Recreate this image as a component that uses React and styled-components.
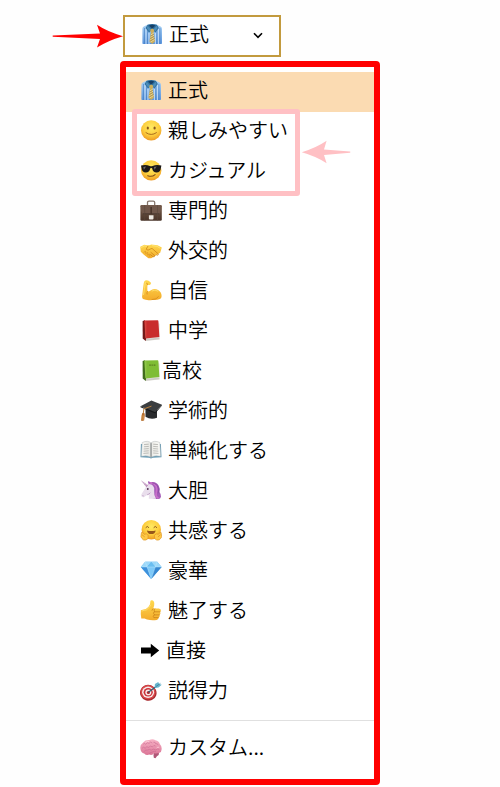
import { useState } from "react";
import styled, { createGlobalStyle } from "styled-components";

const GlobalStyle = createGlobalStyle`
  * {
    box-sizing: border-box;
  }

  body {
    margin: 0;
    background: #fefefe;
    color: #000000;
    font-family: "Noto Sans CJK JP", "Noto Sans", sans-serif;
  }
`;

const Page = styled.main`
  padding: 15px 24% 3px;
`;

const TriggerRow = styled.div`
  display: flex;
  position: relative;
  width: fit-content;
  margin: 0 0 4px 3px;
`;

const Trigger = styled.button`
  display: flex;
  align-items: center;
  min-width: 158px;
  height: 42px;
  padding: 0 16px 2px;
  border: 2px solid #c29a3e;
  background: #ffffff;
  color: inherit;
  font-family: inherit;
  font-size: 20px;
  font-weight: 350;
  line-height: 24px;
  cursor: pointer;
`;

const Menu = styled.div`
  padding: 5px 0 10px;
  border: 6px solid #ff0000;
  border-radius: 4px;
  background: #ffffff;
`;

const Group = styled.ul`
  position: relative;
  margin: 0;
  padding: 0;
  list-style: none;
`;

const Option = styled.button`
  display: flex;
  align-items: center;
  width: 100%;
  height: 40px;
  padding: 0 14px 2px;
  border: 0;
  background: ${({ $selected }) => ($selected ? "#fbdbb2" : "transparent")};
  color: inherit;
  font-family: inherit;
  font-size: 20px;
  font-weight: 350;
  line-height: 24px;
  text-align: left;
  white-space: nowrap;
  cursor: pointer;
`;

const Label = styled.span`
  margin-left: ${({ $gap = 6 }) => $gap}px;
  padding-bottom: 2px;
`;

const Icon = styled.svg`
  flex: none;
  width: 22px;
  height: 22px;
`;

const Chevron = styled.svg`
  width: 10px;
  height: 7px;
  margin-left: auto;
`;

const Divider = styled.hr`
  height: 1px;
  margin: 8px 0;
  border: 0;
  background: #e0e0e0;
`;

const Outline = styled.div`
  position: absolute;
  top: -3px;
  bottom: -4px;
  left: 6px;
  width: 168px;
  border: 5px solid #ffc0c4;
  border-radius: 3px;
  pointer-events: none;
`;

const RedArrow = styled.svg`
  position: absolute;
  top: 9px;
  right: 100%;
  width: 72px;
  height: 24px;
`;

const PinkArrow = styled.svg`
  position: absolute;
  top: 28px;
  left: 175px;
  width: 50px;
  height: 24px;
`;

const Defs = styled.svg`
  position: absolute;
  width: 0;
  height: 0;
`;

function Gradients() {
  return (
    <Defs aria-hidden="true">
      <defs>
        <radialGradient id="face" cx="0.5" cy="0.35" r="0.65">
          <stop offset="0" stopColor="#ffea62" />
          <stop offset="0.6" stopColor="#fdce3e" />
          <stop offset="1" stopColor="#ee9a22" />
        </radialGradient>
        <linearGradient id="skin" x1="0" y1="0" x2="0" y2="1">
          <stop offset="0" stopColor="#ffd94e" />
          <stop offset="1" stopColor="#f3ab2b" />
        </linearGradient>
        <linearGradient id="shirt" x1="0" y1="0" x2="0" y2="1">
          <stop offset="0" stopColor="#a9d2f5" />
          <stop offset="1" stopColor="#5a94dc" />
        </linearGradient>
        <linearGradient id="leather" x1="0" y1="0" x2="0" y2="1">
          <stop offset="0" stopColor="#7b604d" />
          <stop offset="1" stopColor="#493429" />
        </linearGradient>
        <linearGradient id="page" x1="0" y1="0" x2="1" y2="0">
          <stop offset="0" stopColor="#f7f7f4" />
          <stop offset="0.45" stopColor="#e9e9e5" />
          <stop offset="0.5" stopColor="#a9a9a7" />
          <stop offset="0.58" stopColor="#eeeeea" />
          <stop offset="1" stopColor="#fbfbf8" />
        </linearGradient>
        <linearGradient id="brain" x1="0" y1="0" x2="0" y2="1">
          <stop offset="0" stopColor="#f7b3c6" />
          <stop offset="1" stopColor="#db7596" />
        </linearGradient>
      </defs>
    </Defs>
  );
}

const Shirt = () => (
  <>
    <path d="M7 .6 2.8 2.6Q1.4 3.4 1.4 5V19.2Q1.4 20 2.2 20H20.2Q21 20 21 19.2V5Q21 3.4 19.6 2.6L15.4.6Z" fill="url(#shirt)" />
    <path d="M3.5 4V20M6.5 5V20M15.9 5V20M18.9 4V20" stroke="#3f78be" strokeWidth="0.8" opacity="0.7" />
    <path d="M5 5V20M8 9V20M14.4 9V20M17.4 5V20" stroke="#d5eafc" strokeWidth="0.8" />
    <path d="M6.6.8Q11.2-.8 15.8.8L17.8 4 14.4 8.4 11.2 5.4 8 8.4 4.6 4Z" fill="#2f6f9f" />
    <path d="M8 1.4Q11.2.2 14.4 1.4L11.2 4.8Z" fill="#153f65" />
    <path d="m6.6 1.8 3.6 3.6-2.1 1.9L5.8 4ZM15.8 1.8l-3.6 3.6 2.1 1.9L16.6 4Z" fill="#4c8db8" />
    <path d="m9.5 5.5 1.7-.9 1.7.9.3 1.8-.8 1.3 1.6 9-2.8 2.4-2.8-2.4 1.6-9-.8-1.3Z" fill="#ccae5c" />
    <path d="m10 10.8 2.6-1.5M9.6 13.2l3.4-2M9.2 15.8l4.1-2.4M9.3 18.1l4.3-2.6" stroke="#f2dfa0" strokeWidth="0.8" />
    <path d="m9.8 12 3-1.7M9.4 14.5l3.7-2.1M9.2 17l4.3-2.5" stroke="#8e7a43" strokeWidth="0.5" />
  </>
);

const Smile = () => (
  <>
    <circle cx="11.2" cy="10.4" r="10.2" fill="url(#face)" />
    <ellipse cx="7.8" cy="8" rx="1.1" ry="1.6" fill="#87571d" />
    <ellipse cx="14.6" cy="8" rx="1.1" ry="1.6" fill="#87571d" />
    <path d="M6 12.7Q11.2 16.4 16.4 12.7" fill="none" stroke="#a86c1d" strokeWidth="1" strokeLinecap="round" />
  </>
);

const Cool = () => (
  <>
    <circle cx="11.2" cy="10.4" r="10.2" fill="url(#face)" />
    <path d="M1 5.6Q6 4.4 9.8 6q1.4.5 2.8 0Q16.4 4.4 21.4 5.6l-.4 1.8q-.5 5-4.5 5.1-3.5 0-4.4-4.3-.9-.6-1.8 0-.9 4.3-4.4 4.3-4-.1-4.5-5.1Z" fill="#1d1a19" />
    <path d="m3.3 7 2.8-.4-2.2 3.2ZM13.9 7l2.8-.4-2.2 3.2Z" fill="#6c6a68" />
    <path d="M7.7 15.7Q12 17.3 15.1 14.6" fill="none" stroke="#7a4819" strokeWidth="1.1" strokeLinecap="round" />
  </>
);

const Briefcase = () => (
  <>
    <path d="M7.5 5V2.5Q7.5 1.2 9 1.2h4.2q1.5 0 1.5 1.3V5" fill="none" stroke="#87776d" strokeWidth="1.3" />
    <rect x="0.4" y="5" width="21.4" height="15.7" rx="1.2" fill="url(#leather)" />
    <path d="M.8 5.6Q.8 13.4 3.2 13.7H19q2.4-.3 2.4-8.1Z" fill="#70574a" />
    <path d="M3 13.8H19.2" stroke="#3f3029" strokeWidth="0.7" />
    <path d="M4.7 5V20.5M17.5 5V20.5" stroke="#5b483d" strokeWidth="0.6" />
    <path d="M8.9 15.2h4.6v3.2q0 1-1 1H9.9q-1 0-1-1Z" fill="#eeeae3" />
    <path d="M10.4 7h1.5v7h-1.5Z" fill="#473329" />
  </>
);

const Handshake = () => (
  <>
    <path d="M.2 6.7 4.2 4.8 8.6 5.6 11.4 4.4 17.6 5.2 21.8 7.6 20.2 12.7 16.6 15 11.2 18.3 8.4 18.2 3.9 14.7.8 11.7Z" fill="url(#skin)" />
    <path d="m8.2 5.7-2 3.5q1.6 2 4-.1l1.8-.7 6.4 5.6q-.3 2.1-2 .9M10.7 12.2l4.2 3.6q-.5 1.7-2 .8l-2.7-2.2" fill="none" stroke="#c57b14" strokeWidth="0.7" />
    <path d="m3.5 12.5 2-1.4.2 2.5 2-1.2v2.7l2-1v2.7" fill="none" stroke="#d7911e" strokeWidth="0.6" />
    <path d="m1.2 7.5 3.3-1.6 2.3.4M12 5.6l5.2.8 3.2 1.9" fill="none" stroke="#ffe680" strokeWidth="0.8" />
  </>
);

const Biceps = () => (
  <>
    <path d="M5.2.5Q7.8-.7 10.5 2.2q1.1 1.4-.4 2.5-1.1.7-2.4-.1-.6 2.5-.2 6.7 1.3.6 2.6-.6 4-3.2 8-.6 3.6 2.3 3.5 6.1-.1 2.2-1.6 2.8-3.3 1.3-7.9.9-5.3.9-9.1-.8Q1.8 18.2 2.2 15.7 3.1 7.8 3.7 3.3 4 1.2 5.2.5Z" fill="url(#skin)" />
    <path d="M7.8 4.7 6.8 3.2M7.5 11.4Q6.4 12.8 7 14.1M12 19.6Q17 19.8 18.4 16.7" fill="none" stroke="#d98f1c" strokeWidth="0.9" strokeLinecap="round" />
    <path d="M5.4 2Q4.5 8 3.5 15M11.7 11.1Q15 8.9 18.2 11.3" fill="none" stroke="#ffe376" strokeWidth="0.8" />
  </>
);

const Book = ({ cover, spine, edge, text }) => (
  <>
    <path d="m4.1 17.8 1.7 3.1 13.8-1.4V4L18 2Z" fill="#e7e5df" />
    <path d="m5 19.5 14.2-1.4M5.5 20.3l14-1.4" stroke="#a8a69f" strokeWidth="0.4" />
    <path d="m2.6 1.1 2.4-.8 1.1 18.1-.4 2.6-3-2.6Z" fill={spine} />
    <path d="M4.1.5 17.6.2q.7 0 .8.7l1 16.2-13.8 1.4Z" fill={cover} />
    <path d="M5.8 1.2v16.7" stroke={edge} strokeWidth="0.5" />
    {text && <path d="M9.2 5.2h1.6M11.5 5.2h1.3M13.6 5.2h1.8" stroke="#587c21" strokeWidth="1.3" />}
  </>
);

const Cap = () => (
  <>
    <path d="M5.5 8.5v8.2q5.3 3.3 11.5 1V9Z" fill="#292b2d" />
    <path d="M.5 6.3 11.4.6 22 4.7 15.2 12.2Z" fill="#3b3e40" />
    <path d="M.5 6.3 15.2 12.2 22 4.7v.9l-6.8 7.8L.5 7.3Z" fill="#17191b" />
    <path d="m11.5 6.1-7.6 2.8-.7 5" fill="none" stroke="#b87e3b" strokeWidth="1" />
    <path d="M2.4 12.9h2l.4 2-.7 5.6-2.3.4-.8-.7.7-5.3Z" fill="#b66f2e" />
    <path d="M2.1 15.4 1.9 20M3.5 15.4 3.3 20" stroke="#e9ad64" strokeWidth="0.5" />
  </>
);

const OpenBook = () => (
  <>
    <path d="M.9 4.1H20.9l.6 13.1-8.7.5-1.8.8-1.8-.8-8.7-.5Z" fill="#6399b3" />
    <path d="M2.2 2.5Q8-.1 11 3.1 14-.1 19.8 2.5l.8 13.7q-6.6-1.2-9.6 1.1-3-2.3-9.6-1.1Z" fill="url(#page)" stroke="#b5b9ba" strokeWidth="0.5" />
    <path d="m4 4.6 4.7-.4M3.9 6.8l4.9-.4M3.7 9l5-.4M3.6 11.2l5.1-.4M3.4 13.4l5.3-.4M13.2 4.2l4.8.4M13.2 6.4l4.9.4M13.2 8.6l5 .4M13.2 10.8l5.2.4M13.2 13l5.3.4" stroke="#a5a5a0" strokeWidth="0.7" />
    <path d="M11 3.3V17" stroke="#7d8487" strokeWidth="0.7" />
  </>
);

const Unicorn = () => (
  <>
    <path d="m7.9 4.5.4-3.4 2.1 1.1q5.6-1.4 8.2 3.3 1.8 3.2.9 6.4 1.7 2.2 1.5 4.9-.7 2.7-3.5 2.1-4.9.6-7.7-2.7Z" fill="#a45cb8" />
    <path d="M7 5.2q3.3-2 6 .6 2 2.1 1.2 5.8-.5 3.5 1.9 7.2H8.8l.1-4.3q-2.9.9-4.6 2.6-1.8.8-2.9-.8-.5-1.5.5-2.8Z" fill="#e9deec" />
    <path d="M6.4 7.3.9.3 8.1 5.2Z" fill="#b98db9" />
    <path d="m2.1 1.7 1.7.5M3.5 3.4l2-.2M5 5.2l2-.7" stroke="#f3e5f0" strokeWidth="0.5" />
    <path d="M9.8 3q4.6-.5 6.3 3.1 1.4 3.2.2 6.8-1.2 3.6 2.3 5.4" fill="none" stroke="#c96fca" strokeWidth="1.7" />
    <path d="M12.1 2.8q5.2.8 6.2 5.3.4 2.7-.2 5.2" fill="none" stroke="#7d439a" strokeWidth="0.7" />
    <path d="M8.5 5.3 7.9 2.8l2.4 2Z" fill="#ead1e6" />
    <circle cx="7.8" cy="9" r="0.9" fill="#4c2b4e" />
    <path d="m2.4 15.6 1.3.4M7.2 14.8q2.2-.6 3.1-2.1" stroke="#a87fae" strokeWidth="0.6" fill="none" />
  </>
);

const Hug = () => (
  <>
    <circle cx="11.3" cy="9.7" r="9.7" fill="url(#face)" />
    <path d="M5.9 7.4q1.4-2.2 2.8 0M13.9 7.4q1.4-2.2 2.8 0" fill="none" stroke="#8b561c" strokeWidth="1" strokeLinecap="round" />
    <path d="M6.9 10.4q4.4 1.1 8.8 0-.6 3.6-4.4 3.6t-4.4-3.6Z" fill="#96561b" />
    <path d="M1.5 12.5q1.2-1 1.6.7l1.1 1.1q2.3-1.3 4 1 .7 4-2.2 4.7-3 .7-4.2-1.7Q.3 16.8 1.1 15Z" fill="#ffca46" stroke="#d98b20" strokeWidth="0.6" />
    <path d="M21.1 12.5q-1.2-1-1.6.7l-1.1 1.1q-2.3-1.3-4 1-.7 4 2.2 4.7 3 .7 4.2-1.7 1.5-1.5.7-3.3Z" fill="#ffca46" stroke="#d98b20" strokeWidth="0.6" />
    <path d="m2.1 14.8 2.6 2.1M20.5 14.8l-2.6 2.1" stroke="#d98b20" strokeWidth="0.7" />
  </>
);

const Gem = () => (
  <>
    <path d="M5.2 1.8H17.2L21.6 7 11.2 19.1.8 7Z" fill="#5eaee9" />
    <path d="M5.2 1.8.8 7h6.3L11.2 2l4.1 5h6.3l-4.4-5.2Z" fill="#9cd8f9" />
    <path d="m11.2 2 4.1 5H7.1Z" fill="#6abef0" />
    <path d="m.8 7 10.4 12.1L7.1 7Z" fill="#3d91dc" />
    <path d="m7.1 7 4.1 12.1L15.3 7Z" fill="#7ec9f8" />
    <path d="M21.6 7 11.2 19.1 15.3 7Z" fill="#3788d1" />
    <path d="M.8 7H21.6M5.2 1.8 7.1 7l4.1 12.1L15.3 7l1.9-5.2" fill="none" stroke="#c7edff" strokeWidth="0.4" />
  </>
);

const Thumb = () => (
  <>
    <path d="M.9 10.3q2.7-1 4.9-1.2 3.1-2 4.1-4.6.4-1.4.4-2.9Q10.6.1 11.9.3q2.3.4 2.4 3.5.1 2.2-1.1 4.8h5.6q2.4.2 2.1 2.1-.1.9-.8 1.2 1 2.1-.6 3 .6 2-.9 2.7.2 2-1.9 2.3-4.7.8-9.7-.4l-2.4-1.1-3.3.2Q.4 14.6.9 10.3Z" fill="url(#skin)" />
    <path d="M13.2 8.6q-.8 0-1.2 1.7M14.3 11.8h5.6M14.3 14.9h5.1M14 17.6h4.3M14.4 11.4q-1.4-2.3.5-2.7M14.3 14.6q-2-1.5-.3-2.7M14 17.5q-1.8-1.1-.1-2.4" fill="none" stroke="#cb841b" strokeWidth="0.8" strokeLinecap="round" />
    <path d="M1.7 11.1q2.7-1 4.7-1.2 3.5-2.5 4.4-5.1" fill="none" stroke="#ffe77f" strokeWidth="0.7" />
  </>
);

const ArrowRight = () => <path d="M1 7.6H10.8V3.8L19.2 10.5 10.8 17.2V13.4H1Z" fill="#000000" />;

const Target = () => (
  <>
    <ellipse cx="8.3" cy="12.8" rx="8.3" ry="8" transform="rotate(20 8.3 12.8)" fill="#a92c31" />
    <ellipse cx="8.1" cy="12.1" rx="7.5" ry="7.2" fill="#d84849" />
    <ellipse cx="8.1" cy="12.2" rx="6" ry="5.7" fill="#f7ecec" />
    <ellipse cx="8.2" cy="12.3" rx="4.6" ry="4.3" fill="#cb343a" />
    <ellipse cx="8.3" cy="12.4" rx="3" ry="2.8" fill="#f7ecec" />
    <ellipse cx="8.4" cy="12.5" rx="1.6" ry="1.5" fill="#b3262c" />
    <path d="M8.4 12.3 17.5 5.4" stroke="#2d6077" strokeWidth="1.2" />
    <path d="m14.7 7.2.2-3.1 3.4-2.2.8 2.1 2.7.7-3.3 2.8-3.4.6Z" fill="#68b5ce" />
    <path d="m15.6 6.8 4.8-3.4" stroke="#327990" strokeWidth="0.7" />
  </>
);

const Brain = () => (
  <>
    <path d="M13.8 15.2q3.8-1.5 5.2.2.5 2.6-2.1 3.9l-1.4 1.9-1.7-.4-.3-2.3Z" fill="#b05777" />
    <path d="M.5 12.2Q-.4 8 3.1 5.5 5.5 2.8 9.2 3.1q3.5-1.8 6.3.2 3.4.6 4.3 3.7 2.2 2.2 1.8 5.3.1 2.6-2.2 3.5-2.8 1.3-5.4.5-1.6 2.3-4.7 1.3-3.1 1-5.1-1.2-3.3-.6-3.7-4.2Z" fill="url(#brain)" />
    <path d="M3.2 7.2q1.5-1.7 2.5.1 1.5-2.5 3.4-.9 1.2-2.4 3.2-.4M2 11.3q1.6-2.2 3.3 0 .9-2.7 3.3-.9 1.7-2.3 3.9-.5 1.2-2.4 3.1-.8M13.4 5.3q2.2-.6 2.3 1.5 2-.8 2.4 1.4M4.3 14.6q.9-2.3 3.1-1.5 2.2-1.5 3.8.1 2.4-2.1 4.6-.2 1.7-1.5 3.5-.7M9.7 17.2q0-2 2.3-2 2-1.9 4-.5" fill="none" stroke="#c4638a" strokeWidth="0.5" />
    <path d="M5.3 5.4q2-1.6 3.7-.9M16.6 11q1.5-1.7 2.6-.4" fill="none" stroke="#ffd5df" strokeWidth="0.7" />
  </>
);

const RedBook = () => <Book cover="#c92e2d" spine="#721917" edge="#e86a5d" />;
const GreenBook = () => <Book cover="#7fbd35" spine="#416c1c" edge="#b0db71" text />;

const groups = [
  { id: "first", options: [{ label: "正式", icon: Shirt }] },
  {
    id: "everyday",
    outlined: true,
    options: [
      { label: "親しみやすい", icon: Smile },
      { label: "カジュアル", icon: Cool },
    ],
  },
  {
    id: "others",
    options: [
      { label: "専門的", icon: Briefcase },
      { label: "外交的", icon: Handshake },
      { label: "自信", icon: Biceps },
      { label: "中学", icon: RedBook },
      { label: "高校", icon: GreenBook, gap: 0 },
      { label: "学術的", icon: Cap },
      { label: "単純化する", icon: OpenBook },
      { label: "大胆", icon: Unicorn },
      { label: "共感する", icon: Hug },
      { label: "豪華", icon: Gem },
      { label: "魅了する", icon: Thumb },
      { label: "直接", icon: ArrowRight, gap: 4 },
      { label: "説得力", icon: Target },
    ],
  },
  { id: "custom", divided: true, options: [{ label: "カスタム...", icon: Brain }] },
];

function Emoji({ icon: Drawing }) {
  return (
    <Icon viewBox="0 0 22 22" aria-hidden="true">
      <Drawing />
    </Icon>
  );
}

export default function App() {
  const [selected, setSelected] = useState(groups[0].options[0]);
  const [open, setOpen] = useState(true);

  return (
    <Page>
      <GlobalStyle />
      <Gradients />
      <TriggerRow>
        <RedArrow viewBox="0 0 72 24" aria-hidden="true">
          <path d="M2 11.5 49 9.5 46 .8Q56 7.6 72 12.2 57 16.5 46 23.5L49 15 2 12.8Q.8 12.1 2 11.5Z" fill="#ff0000" />
        </RedArrow>
        <Trigger type="button" aria-expanded={open} onClick={() => setOpen(!open)}>
          <Emoji icon={selected.icon} />
          <Label $gap={selected.gap}>{selected.label}</Label>
          <Chevron viewBox="0 0 10 7" aria-hidden="true">
            <path d="M1 1.2 5 5.4 9 1.2" fill="none" stroke="#000000" strokeWidth="1.6" />
          </Chevron>
        </Trigger>
      </TriggerRow>
      {open && (
        <Menu>
          {groups.map((group) => (
            <div key={group.id}>
              {group.divided && <Divider />}
              <Group>
                {group.options.map((option) => (
                  <li key={option.label}>
                    <Option
                      type="button"
                      $selected={option.label === selected.label}
                      aria-pressed={option.label === selected.label}
                      onClick={() => setSelected(option)}
                    >
                      <Emoji icon={option.icon} />
                      <Label $gap={option.gap}>{option.label}</Label>
                    </Option>
                  </li>
                ))}
                {group.outlined && (
                  <>
                    <Outline />
                    <PinkArrow viewBox="0 0 50 24" aria-hidden="true">
                      <path d="M49 11.6 23 9.4 25.6.8Q15 8 .8 12.2 15 16.2 25.6 23.2L23 15 49 12.8Q50 12.2 49 11.6Z" fill="#ffc0c4" />
                    </PinkArrow>
                  </>
                )}
              </Group>
            </div>
          ))}
        </Menu>
      )}
    </Page>
  );
}
